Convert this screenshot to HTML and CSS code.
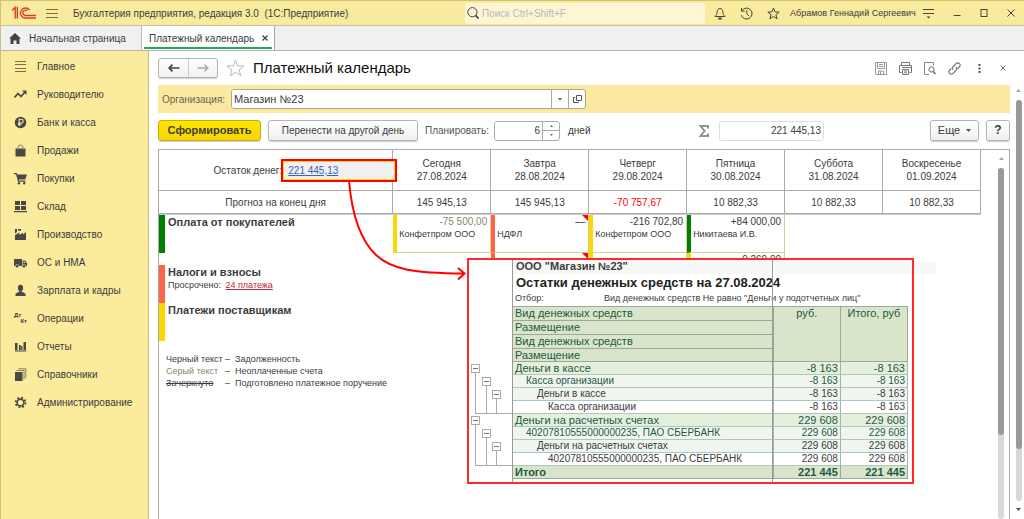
FILE: index.html
```html
<!DOCTYPE html>
<html lang="ru">
<head>
<meta charset="utf-8">
<title>Платежный календарь</title>
<link rel="stylesheet" href="styles.css">
</head>
<body>
<div class="app">
  <header class="titlebar">
    <svg class="logo" width="26" height="14" viewBox="0 0 26 14" fill="none" stroke="#dd3b2a" stroke-width="1.4">
      <path d="M1 4.5 L4.2 1.5 V12.5 M6.3 12.5 V0.8"/>
      <path d="M18.6 4.2 A5 5 0 1 0 14 12 H25"/>
      <path d="M16.3 4.8 A2.7 2.7 0 1 0 14 9.5 H25"/>
    </svg>
    <button class="icon-btn menu-btn" aria-label="Меню"><svg width="12" height="11" viewBox="0 0 12 11" stroke="#77704c"><path d="M0 1.5H12M0 5.5H12M0 9.5H12"/></svg></button>
    <span class="app-title">Бухгалтерия предприятия, редакция 3.0 &nbsp;(1С:Предприятие)</span>
    <label class="search">
      <svg width="12" height="12" viewBox="0 0 12 12" fill="none" stroke="#444"><circle cx="5.4" cy="5.2" r="4.6"/><path d="M8.6 8.4L11.5 11.5" stroke-width="1.6"/></svg>
      <input type="text" placeholder="Поиск Ctrl+Shift+F" aria-label="Поиск">
    </label>
    <div class="title-tools">
      <button class="icon-btn" aria-label="Уведомления"><svg width="12" height="13" viewBox="0 0 12 13" fill="none" stroke="#4a4738"><path d="M1 9.5C2.5 8.2 3 7 3.2 4.8C3.4 2.6 4.5 1.5 6 1.5S8.6 2.6 8.8 4.8C9 7 9.500 8.200 11 9.500Z"/><path d="M4.300 11.500H7.700" stroke-width="2"/></svg></button>
      <button class="icon-btn" aria-label="История"><svg width="13" height="13" viewBox="0 0 13 13" fill="none" stroke="#4a4738"><path d="M1.800 3.800A5.500 5.500 0 1 1 1.300 8.200M1.500 1V4.200H4.700M6.800 3.200V6.800L9 9"/></svg></button>
      <button class="icon-btn" aria-label="Избранное"><svg width="13" height="13" viewBox="0 0 13 13" fill="none" stroke="#4a4738"><path d="M6.500 1L8 4.900L12.200 5.100L8.900 7.700L10.100 11.800L6.500 9.500L2.900 11.800L4.100 7.700L.8 5.100L5 4.900Z"/></svg></button>
    </div>
    <span class="user">Абрамов Геннадий Сергеевич</span>
    <div class="window-tools">
      <button class="icon-btn" aria-label="Настройки"><svg width="11" height="12" viewBox="0 0 11 12" stroke="#4a4738"><path d="M0 2.500H11M0 6.500H11"/><path d="M3.500 9.500H7.500L5.500 11.500Z" fill="#4a4738" stroke="none"/></svg></button>
      <button class="icon-btn" aria-label="Свернуть"><svg width="8" height="8" viewBox="0 0 8 8" stroke="#4a4738"><path d="M0.500 6.500H7.500"/></svg></button>
      <button class="icon-btn" aria-label="Развернуть"><svg width="8" height="8" viewBox="0 0 8 8" fill="none" stroke="#4a4738"><rect x="1" y=".5" width="6" height="7"/></svg></button>
      <button class="icon-btn" aria-label="Закрыть"><svg width="8" height="8" viewBox="0 0 8 8" stroke="#4a4738"><path d="M.5.5L7.500 7.500M7.500.5L.5 7.500"/></svg></button>
    </div>
  </header>

  <nav class="tabs">
    <a class="tab home" href="#"><svg width="12" height="11" viewBox="0 0 12 11" fill="#444"><path d="M6 0L12 5.500H10.500V11H7.500V7.500H4.500V11H1.500V5.500H0Z"/></svg>Начальная страница</a>
    <a class="tab active" href="#"><span class="tab-text">Платежный календарь<svg width="6" height="6" viewBox="0 0 6 6" stroke="#444" stroke-width="1.300"><path d="M.5.5L5.500 5.500M5.500.5L.5 5.500"/></svg></span></a>
  </nav>

  <div class="workspace">
    <nav class="sidebar">
      <a href="#"><svg width="13" height="13" viewBox="0 0 13 13" stroke="#77704c"><path d="M1 1.500H12M1 4.500H12M1 8.500H12M1 11.500H12"/></svg>Главное</a>
      <a href="#"><svg width="13" height="13" viewBox="0 0 13 13" fill="none" stroke="#484848" stroke-width="1.700"><path d="M.5 9.500L4 5.500L7 8.500L11 4"/><path d="M8 2.500H12.500V7Z" fill="#484848" stroke="none"/></svg>Руководителю</a>
      <a href="#"><svg width="13" height="13" viewBox="0 0 13 13" fill="none"><circle cx="6.500" cy="6.500" r="5.800" fill="#484848"/><path d="M5.200 10V3.300H7.300A1.900 1.900 0 0 1 7.300 7.100H4M4 8.700H7.500" stroke="#f9eb9e" stroke-width="1.100"/></svg>Банк и касса</a>
      <a href="#"><svg width="13" height="13" viewBox="0 0 13 13" fill="none"><path d="M1.500 4.500H11.500V12.500H1.500Z" fill="#484848"/><path d="M4 6V3.500A2.500 2.500 0 0 1 9 3.500V6" stroke="#8b845b"/></svg>Продажи</a>
      <a href="#"><svg width="13" height="13" viewBox="0 0 13 13" fill="#484848"><path d="M0 1H2.700L3.200 2.500H13L11.200 7.500H4.800L5 8.500H11.500V9.700H4L2 2.200H0Z"/><circle cx="5" cy="11.300" r="1.200"/><circle cx="10.200" cy="11.300" r="1.200"/></svg>Покупки</a>
      <a href="#"><svg width="13" height="13" viewBox="0 0 13 13" fill="#484848"><path d="M1 1H6V5H1ZM7 1H12V5H7ZM1 6H6V10H1ZM7 6H12V10H7ZM0 11H13V12.200H0Z"/></svg>Склад</a>
      <a href="#"><svg width="13" height="13" viewBox="0 0 13 13" fill="#484848"><path d="M1 12V7L5.500 4.500V7L9 4.800V6.500L12 4V12ZM1 1H3V4L1 5.500ZM4 1H7V2.800H4Z"/></svg>Производство</a>
      <a href="#"><svg width="13" height="13" viewBox="0 0 13 13" fill="#484848"><path d="M0 3H8V10H0ZM8.600 4.500H11.200L13 7V10H8.600Z"/><path d="M9.500 5.500H10.800L11.800 7H9.500Z" fill="#d5ca90"/><circle cx="3" cy="10.200" r="1.700" stroke="#f9eb9e" stroke-width=".6"/><circle cx="10" cy="10.200" r="1.700" stroke="#f9eb9e" stroke-width=".6"/></svg>ОС и НМА</a>
      <a href="#"><svg width="13" height="13" viewBox="0 0 13 13" fill="#484848"><ellipse cx="6.500" cy="4" rx="2.600" ry="3.200"/><path d="M1.500 12V9.700C3 8.700 4.500 8.300 5.200 7.200H7.800C8.500 8.300 10 8.700 11.500 9.700V12Z"/></svg>Зарплата и кадры</a>
      <a href="#"><span class="dtkt"><i>Дт</i><i>Кт</i></span>Операции</a>
      <a href="#"><svg width="13" height="13" viewBox="0 0 13 13" fill="#484848"><path d="M1 3H3.500V10H1ZM5 5H6.800V10H5ZM7.200 6H8.500V10H7.200ZM9.500 2H12V10H9.500ZM1 10.500H12.500V11.500H1Z"/></svg>Отчеты</a>
      <a href="#"><svg width="13" height="13" viewBox="0 0 13 13" fill="none" stroke="#6b6647" stroke-width=".8"><path d="M1 4H8.500V13H1Z" fill="#484848" stroke="none"/><path d="M2.500 2.500H10V11.500M4.500 .8H11.800V10"/></svg>Справочники</a>
      <a href="#"><svg width="13" height="13" viewBox="0 0 13 13" fill="none" stroke="#484848"><circle cx="6.500" cy="6.500" r="3.400" stroke-width="1.600"/><circle cx="6.500" cy="6.500" r="4.900" stroke-width="1.800" stroke-dasharray="1.900 1.950"/></svg>Администрирование</a>
    </nav>

    <main class="content">
      <div class="page">
        <div class="page-head">
          <div class="nav-group">
            <button aria-label="Назад"><svg width="12" height="8" viewBox="0 0 12 8" fill="none" stroke="#444" stroke-width="1.700"><path d="M4.500 .7L1.200 4L4.500 7.300M1.200 4H11.500"/></svg></button>
            <button aria-label="Вперед"><svg width="12" height="8" viewBox="0 0 12 8" fill="none" stroke="#aaa" stroke-width="1.500"><path d="M7.500 .7L10.800 4L7.500 7.300M10.800 4H.5"/></svg></button>
          </div>
          <button class="icon-btn fav" aria-label="В избранное"><svg width="19" height="18" viewBox="0 0 19 18" fill="none" stroke="#b4bcc4"><path d="M9.500 1L11.600 6.800L18 7L13 10.800L14.800 16.800L9.500 13.300L4.200 16.800L6 10.800L1 7L7.400 6.800Z"/></svg></button>
          <h1>Платежный календарь</h1>
          <div class="page-tools">
            <button class="icon-btn" aria-label="Сохранить"><svg width="12" height="13" viewBox="0 0 12 13" fill="none" stroke="#999"><path d="M.5.5H11.500V12.500H.5ZM2.500.5V6.500H9.500V.5M4 2.500H8M4 4.500H8M3.500 12.500V9H8.500V12.500M5.500 9.500V12"/></svg></button>
            <button class="icon-btn" aria-label="Печать"><svg width="13" height="13" viewBox="0 0 13 13" fill="none" stroke="#777"><path d="M2.500 3.500V.5H10.500V3.500M2.500 10.500H.5V3.500H12.500V10.500H10.500M3 5.500H12M3.500 7.500H9.500V12.500H3.500ZM5 9H8M5 10.800H8"/></svg></button>
            <button class="icon-btn" aria-label="Просмотр"><svg width="12" height="13" viewBox="0 0 12 13" fill="none" stroke="#888"><path d="M5 12.500H.5V.5H9.500V3.500"/><circle cx="7.500" cy="7.500" r="2.600" stroke="#666"/><path d="M9.300 9.500L11.500 12" stroke="#666" stroke-width="1.400"/></svg></button>
            <button class="icon-btn" aria-label="Ссылка"><svg width="13" height="13" viewBox="0 0 13 13" fill="none" stroke="#777" stroke-width="1.200"><path d="M5 7.800C3.800 6.600 4.300 5.500 5.200 4.500L8 1.700C9 .7 10.500.7 11.500 1.600S12.300 4 11.300 5L9.500 6.800M8 5.200C9.200 6.400 8.700 7.500 7.800 8.500L5 11.300C4 12.300 2.500 12.300 1.500 11.400S.7 9 1.700 8L3.200 6.500"/></svg></button>
            <button class="icon-btn" aria-label="Ещё действия"><svg width="3" height="9" viewBox="0 0 3 9" fill="#555"><path d="M.5 0H2.500V2H.5ZM.5 3.500H2.500V5.500H.5ZM.5 7H2.500V9H.5Z"/></svg></button>
            <button class="icon-btn" aria-label="Закрыть"><svg width="6" height="6" viewBox="0 0 6 6" stroke="#666"><path d="M.5.5L5.500 5.500M5.500.5L.5 5.500"/></svg></button>
          </div>
        </div>

        <div class="org-bar">
          <label for="org">Организация:</label>
          <div class="combo">
            <input id="org" type="text" value="Магазин №23">
            <button aria-label="Выбрать"><svg width="4" height="3" viewBox="0 0 4 3" fill="#555"><path d="M0 0H4L2 2.500Z"/></svg></button>
            <button aria-label="Открыть"><svg width="9" height="8" viewBox="0 0 9 8" fill="none" stroke="#555"><path d="M3.500.5H8.500V5.500H3.500ZM2 2.500H.5V7.500H5.500V6.500"/></svg></button>
          </div>
        </div>

        <div class="command-bar">
          <button class="btn primary">Сформировать</button>
          <button class="btn move">Перенести на другой день</button>
          <label for="days">Планировать:</label>
          <div class="spinner">
            <input id="days" type="text" value="6">
            <div class="steps">
              <button aria-label="Больше"><svg width="3" height="2" viewBox="0 0 3 2" fill="#666"><path d="M0 2H3L1.500 0Z"/></svg></button>
              <button aria-label="Меньше"><svg width="3" height="2" viewBox="0 0 3 2" fill="#666"><path d="M0 0H3L1.500 2Z"/></svg></button>
            </div>
          </div>
          <span class="unit">дней</span>
          <svg class="sigma" width="10" height="12" viewBox="0 0 10 12" fill="none" stroke="#929292" stroke-width="2"><path d="M9 3.500V1H1.500L5.500 6L1.500 11H9V8.500"/></svg>
          <input class="sum" type="text" value="221 445,13" aria-label="Сумма" readonly>
          <button class="btn more">Еще<svg width="5" height="3" viewBox="0 0 5 3" fill="#555"><path d="M0 0H5L2.500 3Z"/></svg></button>
          <button class="btn help">?</button>
        </div>

        <section class="calendar">
          <div class="calendar-main">
            <table class="days">
              <tr class="day-row">
                <th class="balance"><div><span>Остаток денег:</span><a href="#">221 445,13</a></div></th>
                <th>Сегодня<br>27.08.2024</th><th>Завтра<br>28.08.2024</th><th>Четверг<br>29.08.2024</th><th>Пятница<br>30.08.2024</th><th>Суббота<br>31.08.2024</th><th>Воскресенье<br>01.09.2024</th>
              </tr>
              <tr class="forecast">
                <td>Прогноз на конец дня</td><td>145 945,13</td><td>145 945,13</td><td class="negative">-70 757,67</td><td>10 882,33</td><td>10 882,33</td><td>10 882,33</td>
              </tr>
            </table>
            <div class="lower">
              <div class="categories">
                <div class="category green"><b>Оплата от покупателей</b></div>
                <div class="category red"><b>Налоги и взносы</b><p>Просрочено: <a href="#">24 платежа</a></p></div>
                <div class="category gold"><b>Платежи поставщикам</b></div>
                <dl class="legend">
                  <dt>Черный текст</dt><dd>–</dd><dd>Задолженность</dd>
                  <dt class="muted">Серый текст</dt><dd>–</dd><dd>Неоплаченные счета</dd>
                  <dt class="struck">Зачеркнуто</dt><dd>–</dd><dd>Подготовлено платежное поручение</dd>
                </dl>
              </div>
              <div class="payments">
                <div class="pay gold"><span class="amount muted">-75 500,00</span><span>Конфетпром ООО</span></div>
                <div class="pay red flag"><span class="amount">—</span><span>НДФЛ</span></div>
                <div class="pay gold"><span class="amount">-216 702,80</span><span>Конфетпром ООО</span></div>
                <div class="pay green"><span class="amount">+84 000,00</span><span>Никитаева И.В.</span></div>
                <div class="pay clipped none"></div>
                <div class="pay clipped red flag"></div>
                <div class="pay clipped gold"></div>
                <div class="pay clipped gold"><span class="amount">-9 260,00</span></div>
              </div>
            </div>
          </div>
          <div class="scroll inner"><svg width="5" height="4" viewBox="0 0 5 4" fill="#aaa"><path d="M0 3H5L2.500 0Z"/></svg><div class="track"><div class="thumb"></div></div></div>

          <svg class="arrow" width="120" height="104" viewBox="0 0 120 104" fill="none" stroke="#f00" stroke-width="2"><path d="M2 0C5 34 13 59 29 74C45 89 68 92 117 92.500"/><path d="M111 87L117.500 92.500L111 98.500"/></svg>

          <div class="strip"></div>
          <div class="report">
            <div class="gutter">
              <i class="branch l1 g1"></i><i class="branch l2 g1"></i><i class="branch l3 g1"></i>
              <i class="branch l1 g2"></i><i class="branch l2 g2"></i><i class="branch l3 g2"></i>
              <button class="node l1 g1" aria-label="Свернуть"></button><button class="node l2 g1" aria-label="Свернуть"></button><button class="node l3 g1" aria-label="Свернуть"></button>
              <button class="node l1 g2" aria-label="Свернуть"></button><button class="node l2 g2" aria-label="Свернуть"></button><button class="node l3 g2" aria-label="Свернуть"></button>
            </div>
            <div class="report-body">
              <div class="company">ООО "Магазин №23"</div>
              <h2>Остатки денежных средств на 27.08.2024</h2>
              <div class="filter"><span>Отбор:</span><span>Вид денежных средств Не равно "Деньги у подотчетных лиц"</span></div>
              <table class="balances">
                <thead>
                  <tr><th>Вид денежных средств</th><th rowspan="4">руб.</th><th rowspan="4">Итого, руб</th></tr>
                  <tr><th>Размещение</th></tr>
                  <tr><th>Вид денежных средств</th></tr>
                  <tr><th>Размещение</th></tr>
                </thead>
                <tbody>
                  <tr class="r1"><td>Деньги в кассе</td><td>-8 163</td><td>-8 163</td></tr>
                  <tr class="r2"><td>Касса организации</td><td>-8 163</td><td>-8 163</td></tr>
                  <tr class="r3"><td>Деньги в кассе</td><td>-8 163</td><td>-8 163</td></tr>
                  <tr class="r4"><td>Касса организации</td><td>-8 163</td><td>-8 163</td></tr>
                  <tr class="r1"><td>Деньги на расчетных счетах</td><td>229 608</td><td>229 608</td></tr>
                  <tr class="r2"><td>40207810555000000235, ПАО СБЕРБАНК</td><td>229 608</td><td>229 608</td></tr>
                  <tr class="r3"><td>Деньги на расчетных счетах</td><td>229 608</td><td>229 608</td></tr>
                  <tr class="r4"><td>40207810555000000235, ПАО СБЕРБАНК</td><td>229 608</td><td>229 608</td></tr>
                  <tr class="total"><td>Итого</td><td>221 445</td><td>221 445</td></tr>
                </tbody>
              </table>
              <i class="rule"></i>
            </div>
          </div>
        </section>
      </div>
      <div class="scroll outer"><svg width="5" height="4" viewBox="0 0 5 4" fill="#aaa"><path d="M0 3H5L2.500 0Z"/></svg><div class="track"><div class="thumb"></div></div><svg width="5" height="4" viewBox="0 0 5 4" fill="#555"><path d="M0 0H5L2.500 3Z"/></svg></div>
    </main>
  </div>
</div>
</body>
</html>
```
FILE: styles.css
```css
* { box-sizing: border-box; }
body { margin: 0; font-family: "Liberation Sans", Arial, sans-serif; font-size: 10px; line-height: 13px; color: #3c3c3c; background: #fff; }
button, input { font: inherit; color: inherit; margin: 0; padding: 0; }
a { color: inherit; text-decoration: none; }
svg { display: block; flex: none; }
.app { min-height: 100vh; display: flex; flex-direction: column; border-left: 1px solid #cfc07c; }
.icon-btn { border: 0; background: none; display: flex; align-items: center; justify-content: center; }

.titlebar { height: 26px; display: flex; align-items: center; background: #f9eb9e; border-top: 1px solid #d2c272; border-bottom: 1px solid #c9c096; padding: 0 9px 0 10px; white-space: nowrap; }
.menu-btn { margin-left: 9px; }
.app-title { margin-left: 15px; flex: 1; }
.search { width: 240px; height: 21px; flex: none; background: #fdf5d3; border-radius: 3px; display: flex; align-items: center; gap: 3px; padding-left: 2px; }
.search input { border: 0; background: none; flex: 1; min-width: 0; outline: 0; }
.search input::placeholder { color: #bdb8bb; opacity: 1; }
.title-tools { display: flex; gap: 14px; margin-left: 9px; }
.user { margin-left: 10px; font-size: 9px; width: 123px; }
.window-tools { display: flex; align-items: center; gap: 19px; margin-left: 10px; }

.tabs { height: 25px; display: flex; background: #f0f0f0; border-bottom: 1px solid #b5b5b5; white-space: nowrap; }
.tab { display: flex; align-items: center; }
.home { width: 141px; padding-left: 8px; gap: 8px; border-right: 1px solid #bbb; }
.active { background: #fff; padding: 0 2px; border-right: 1px solid #aaa; align-items: stretch; }
.tab-text { display: flex; align-items: center; gap: 8px; padding: 3px 4px 0 5px; border-bottom: 2px solid #2aa55c; margin-bottom: 1px; }

.workspace { flex: 1; display: flex; }
.sidebar { width: 148px; flex: none; background: #faeb9d; border-right: 1px solid #c9bd84; display: flex; flex-direction: column; padding-top: 1px; }
.sidebar a { height: 28px; display: flex; align-items: center; gap: 10px; padding-left: 13px; white-space: nowrap; }
.dtkt { width: 13px; font-size: 6px; line-height: 6px; font-weight: bold; display: flex; flex-direction: column; }
.dtkt i { font-style: normal; }
.dtkt i + i { align-self: flex-end; }

.content { flex: 1; min-width: 0; display: flex; }
.page { flex: 1; min-width: 0; display: flex; flex-direction: column; margin-left: 9px; }
.page-head { height: 34px; display: flex; align-items: center; }
.nav-group { display: flex; height: 20px; border: 1px solid #b4b4b4; border-radius: 3px; box-shadow: 0 1px 1px #ccc; background: linear-gradient(#fff, #f0f0f0); }
.nav-group button { width: 29px; border: 0; background: none; display: flex; align-items: center; justify-content: center; }
.nav-group button + button { border-left: 1px solid #ccc; }
.fav { margin-left: 8px; }
h1 { margin: 0 0 0 8px; font-size: 15px; line-height: 20px; font-weight: normal; color: #111; flex: 1; white-space: nowrap; }
.page-tools { display: flex; align-items: center; gap: 12px; padding-right: 4px; }
.page-tools button:nth-last-child(2) { margin: 0 7px 0 5px; }
.org-bar { height: 28px; display: flex; align-items: center; gap: 4px; background: #fce9a1; padding-left: 4px; }
.org-bar label { width: 65px; color: #6b6650; }
.combo { width: 355px; height: 20px; display: flex; background: #fff; border: 1px solid #aba78f; border-radius: 3px; overflow: hidden; }
.combo input { flex: 1; min-width: 0; border: 0; padding-left: 2px; outline: 0; font-size: 11px; }
.combo button { width: 17px; border: 0; border-left: 1px solid #aaa; background: none; display: flex; align-items: center; justify-content: center; }

.command-bar { display: flex; align-items: center; margin: 7px 0 8px; height: 21px; white-space: nowrap; }
.btn { height: 21px; border: 1px solid #b4b4b4; border-radius: 3px; background: linear-gradient(#fff, #f0f0f0); box-shadow: 0 1px 1px #ccc; display: flex; align-items: center; justify-content: center; }
.primary { width: 103px; background: linear-gradient(#ffe600, #f7d600); border-color: #c7ad12; font-size: 11px; font-weight: bold; }
.move { width: 150px; margin: 0 7px; }
.command-bar label { width: 62px; color: #555; }
.command-bar .spinner { margin-left: 7px; }
.spinner { width: 66px; height: 20px; display: flex; border: 1px solid #aaa; border-radius: 3px; overflow: hidden; }
.spinner input { flex: 1; min-width: 0; border: 0; text-align: right; padding-right: 2px; outline: 0; }
.steps { width: 17px; border-left: 1px solid #aaa; display: flex; flex-direction: column; }
.steps button { flex: 1; border: 0; background: none; display: flex; align-items: center; justify-content: center; }
.steps button + button { border-top: 1px solid #aaa; }
.unit { margin-left: 8px; flex: 1; }
.sum { width: 105px; height: 20px; margin: 0 106px 0 10px; border: 1px solid #ddd; border-radius: 3px; text-align: right; padding-right: 2px; background: #fff; }
.more { width: 49px; gap: 6px; margin-right: 7px; font-size: 11px; }
.help { width: 24px; font-size: 12px; font-weight: bold; }

.calendar { flex: 1; display: flex; position: relative; border: 1px solid #aaa; border-bottom: 0; }
.calendar-main { flex: 1; min-width: 0; }
.days { width: calc(100% - 15px); table-layout: fixed; border-collapse: separate; border-spacing: 0; text-align: center; }
.days th, .days td { font-weight: normal; padding: 0; border-right: 1px solid #aaa; border-bottom: 1px solid #aaa; }
.days tr > :first-child { width: 28.5%; }
.day-row { height: 41px; }
.forecast { height: 23px; }
.negative { color: #f00; }
.balance div { display: flex; align-items: center; justify-content: flex-end; margin-right: -5px; position: relative; }
.balance a { width: 116px; height: 23px; margin-left: -1px; padding: 3px 5px; text-align: left; background: #f0f0f0; border: 2px solid #f00; box-shadow: inset 0 0 0 1px #ffd21a; color: #3a63b5; text-decoration: underline; }
.lower { width: calc(100% - 15px); display: grid; grid-template-columns: 28.5% minmax(0, 1fr); border-top: 1px solid #ccc; }
.category { height: 38px; border-left: 6px solid; padding: 1px 0 0 3px; white-space: nowrap; }
.category b { font-size: 11px; }
.category p { margin: 0; font-size: 9px; }
.category p a { margin-left: 2px; color: #b8283c; text-decoration: underline; }
.category.green { margin-bottom: 12px; }
.green { border-left-color: #008000; }
.red { border-left-color: #ff6347; }
.gold { border-left-color: #ffd700; }
.muted { color: #8e8768; }
.legend { margin: 12px 0 0 7px; display: grid; grid-template-columns: 59px 10px auto; font-size: 9px; line-height: 12px; white-space: nowrap; }
.legend dt, .legend dd { margin: 0; }
.struck { text-decoration: line-through; }
.payments { display: grid; grid-template-columns: repeat(6, minmax(0, 1fr)); grid-template-rows: 38px 5px; align-content: start; }
.pay { position: relative; border-left-width: 4px; border-left-style: solid; border-right: 1px solid #d5cf9a; border-bottom: 1px solid #d5cf9a; padding: 0 3px 0 2px; font-size: 9px; display: flex; flex-direction: column; white-space: nowrap; }
.pay:nth-child(4n+1) { grid-column: 1; }
.pay .amount { align-self: flex-end; font-size: 10px; }
.clipped { overflow: hidden; border-bottom: 0; }
.none { border-left-color: transparent; border-right-color: transparent; }
.flag::after { content: ""; position: absolute; top: 0; right: 0; border: 3px solid transparent; border-top-color: #f00; border-right-color: #f00; }

.scroll { display: flex; flex-direction: column; align-items: center; }
.track { width: 6px; background: #d8d8d8; border-radius: 3px; flex: 1; display: flex; }
.thumb { width: 6px; background: #999; border-radius: 3px; height: 76%; }
.inner { width: 13px; padding: 7px 3px 0 0; gap: 7px; }
.outer { width: 14px; padding: 38px 0 7px 3px; gap: 7px; }
.outer .thumb { height: 87%; }

.arrow { position: absolute; left: 188px; top: 31px; }
.strip { position: absolute; left: 308px; top: 111px; width: 469px; height: 13px; background: #f8f8f8; }
.report { position: absolute; left: 308px; top: 108px; width: 447px; border: 2px solid #ff2a2a; background: #fff; display: flex; }
.gutter { width: 44px; flex: none; border-right: 1px solid #999; display: grid; grid-template-columns: 11px 10px 11px 10px; grid-template-rows: 102px repeat(8, 13px); padding-left: 1px; }
.node { width: 9px; height: 9px; align-self: center; justify-self: center; background: linear-gradient(#777, #777) center / 5px 1px no-repeat #fff; border: 1px solid #aaa; }
.branch { border-left: 1px solid #aaa; border-bottom: 1px solid #aaa; margin: 6px 0 0 5px; }
.l1 { grid-column: 1; } .l2 { grid-column: 2; } .l3 { grid-column: 3; }
.branch.l1 { grid-column: 1 / 5; } .branch.l2 { grid-column: 2 / 5; } .branch.l3 { grid-column: 3 / 5; }
.l1.g1 { grid-row: 2; } .l2.g1 { grid-row: 3; } .l3.g1 { grid-row: 4; }
.l1.g2 { grid-row: 6; } .l2.g2 { grid-row: 7; } .l3.g2 { grid-row: 8; }
.branch.l1.g1 { grid-row: 2 / 6; } .branch.l2.g1 { grid-row: 3 / 6; } .branch.l3.g1 { grid-row: 4 / 6; }
.branch.l1.g2 { grid-row: 6 / 10; } .branch.l2.g2 { grid-row: 7 / 10; } .branch.l3.g2 { grid-row: 8 / 10; }
.report-body { flex: 1; position: relative; padding: 0 4px 3px 0; white-space: nowrap; }
.company { font-size: 11px; height: 14px; line-height: 13px; padding-left: 3px; font-weight: bold; background: #f8f8f8; margin-right: -4px; }
h2 { margin: 0; padding-left: 3px; font-size: 13px; line-height: 17px; color: #222; }
.filter { height: 15px; line-height: 15px; font-size: 9px; padding-left: 2px; display: flex; }
.filter span:first-child { width: 89px; }
.balances { width: 100%; table-layout: fixed; border-collapse: separate; border-spacing: 0; line-height: 12px; border-top: 1px solid #9ca99a; color: #1f5944; }
.balances tr { height: 13px; }
.balances th, .balances td { padding: 0 2px; font-weight: normal; text-align: right; border-right: 1px solid #9db9ac; border-bottom: 1px solid #a9c9bc; width: 17%; }
.balances tr > :first-child { text-align: left; }
.balances th { background: #d8e5cb; border-color: #9ca99a; text-align: center; vertical-align: top; }
.balances thead, .balances .r1, .balances .total { font-size: 11px; }
.balances thead tr:first-child > :first-child { width: 66%; }
.balances thead tr { height: 14px; }
.balances thead tr:last-child { height: 12px; }
.r1 { background: #e4efdc; } .r2, .r3 { background: #f0f5ef; }
.r3, .r4 { color: #3c3c3c; }
.balances .r2 > :first-child { padding-left: 13px; }
.balances .r3 > :first-child { padding-left: 24px; }
.balances .r4 > :first-child { padding-left: 35px; }
.total { background: #d8e5cb; }
.balances .total td { font-weight: bold; border-color: #9ca99a; }
.rule { position: absolute; left: 65%; top: 0; bottom: 0; border-left: 1px solid #999; }
```
